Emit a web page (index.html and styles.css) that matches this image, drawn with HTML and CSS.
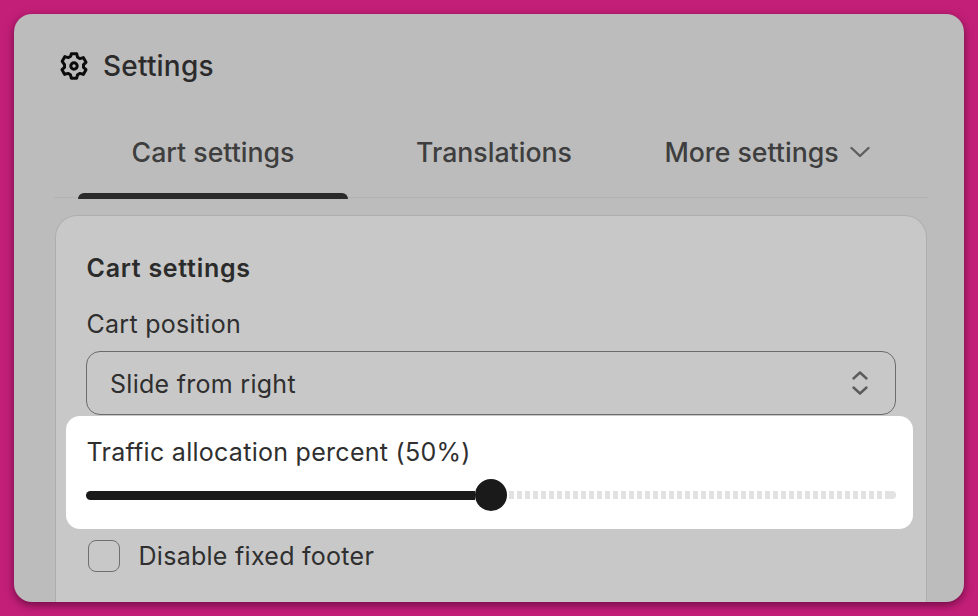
FILE: index.html
```html
<!DOCTYPE html>
<html lang="en">
<head>
<meta charset="utf-8">
<title>Settings</title>
<link rel="stylesheet" href="styles.css">
</head>
<body>
<main class="window">
  <header class="title-row">
    <svg class="gear" viewBox="0 0 30 30" width="30" height="30" fill="none" stroke="#0c0c0c" stroke-width="3" stroke-linejoin="round">
      <path d="M12.300 2.800h5.400l.8 3.400 2.500 1.400 3.300-1 2.700 4.700-2.500 2.300v2.800l2.500 2.300-2.700 4.700-3.300-1-2.500 1.400-.8 3.400h-5.400l-.8-3.400-2.500-1.400-3.300 1-2.700-4.700 2.500-2.300v-2.800L3.200 10.300l2.700-4.700 3.300 1 2.500-1.400z"/>
      <circle cx="15" cy="15" r="3.200"/>
    </svg>
    <h1 class="title">Settings</h1>
  </header>
  <nav class="tabs">
    <div class="tab tab-active">Cart settings</div>
    <div class="tab tab-mid">Translations</div>
    <div class="tab tab-more">More settings
      <svg class="chev" viewBox="0 0 20 12" width="20" height="12" fill="none" stroke="#5e5e5e" stroke-width="2.400" stroke-linecap="round" stroke-linejoin="round"><path d="M1.500 2l8.500 8 8.500-8"/></svg>
    </div>
  </nav>
  <section class="card">
    <h2 class="card-title">Cart settings</h2>
    <div class="label">Cart position</div>
    <div class="select">
      <span class="select-text">Slide from right</span>
      <svg viewBox="0 0 18 28" width="18" height="28" fill="none" stroke="#5c5c5c" stroke-width="2.400" stroke-linecap="round" stroke-linejoin="round"><path d="M2.500 9.500L9 3.500l6.500 6M2.500 18.500L9 24.500l6.500-6"/></svg>
    </div>
    <div class="highlight">
      <div class="label">Traffic allocation percent (50%)</div>
      <div class="slider">
        <div class="fill"></div>
        <div class="thumb"></div>
        <div class="rest"></div>
      </div>
    </div>
    <label class="check-row">
      <span class="box"></span>
      <span class="label">Disable fixed footer</span>
    </label>
  </section>
</main>
</body>
</html>
```
FILE: styles.css
```css
* { box-sizing: border-box; }
html, body { height: 100%; }
body {
  margin: 0;
  padding: 14px;
  background: #c41f78;
  font-family: Inter, "Liberation Sans", sans-serif;
  color: #2b2b2b;
  overflow: hidden;
}
.window {
  width: 950px;
  height: 588px;
  background: #bcbcbc;
  border-radius: 18px;
  overflow: hidden;
  box-shadow: 0 3px 10px rgba(60, 0, 40, .65);
  padding: 0 36px 0 40px;
}
.title-row {
  display: flex;
  align-items: center;
  gap: 14px;
  height: 30px;
  margin-top: 37px;
  margin-left: 5px;
}
.gear { flex: none; }
.title {
  margin: 0;
  font-size: 28px;
  font-weight: 550;
  line-height: 30px;
  letter-spacing: .2px;
  color: #2b2b2b;
}
.tabs {
  display: flex;
  margin-top: 52px;
  width: 874px;
  height: 65px;
  padding-left: 24px;
  border-bottom: 1px solid #b2b2b2;
  font-size: 26.700px;
  font-weight: 550;
  color: #3e3e3e;
}
.tab {
  position: relative;
  display: flex;
  align-items: center;
  justify-content: center;
  height: 64px;
  padding-bottom: 26px;
  white-space: nowrap;
}
.tab-active { width: 270px; }
.tab-active::after {
  content: "";
  position: absolute;
  left: 0;
  right: 0;
  bottom: -2px;
  height: 6px;
  border-radius: 6px 6px 0 0;
  background: #2a2a2a;
}
.tab-mid { width: 292px; }
.tab-more { width: 254px; gap: 11px; }
.card {
  margin: 17px 0 0 1px;
  width: 872px;
  height: 400px;
  background: #c8c8c8;
  border: 1px solid #aeaeae;
  border-bottom: 0;
  border-radius: 22px 22px 0 0;
  padding: 0 30px;
}
.card-title {
  margin: 38px 0 0;
  padding-left: .5px;
  font-size: 25px;
  font-weight: 600;
  line-height: 29px;
  letter-spacing: .72px;
  color: #2b2b2b;
}
.label {
  padding-left: .5px;
  font-size: 25px;
  line-height: 30px;
  color: #2f2f2f;
  letter-spacing: .28px;
}
.card-title + .label { margin-top: 26px; }
.select {
  margin-top: 12px;
  width: 810px;
  height: 64px;
  display: flex;
  align-items: center;
  justify-content: space-between;
  padding: 0 26px 0 23px;
  border: 1px solid #6b6b6b;
  border-radius: 14px;
  font-size: 25px;
  color: #2f2f2f;
  letter-spacing: .28px;
}
.select-text { padding-top: 2px; }
.highlight {
  margin: 1px 0 0 -20px;
  width: 847px;
  height: 113px;
  background: #fff;
  border-radius: 14px;
  padding: 21px 17px 0 20px;
}
.slider {
  display: flex;
  align-items: center;
  margin-top: 12px;
  height: 32px;
  width: 810px;
}
.fill {
  width: 389px;
  height: 9px;
  border-radius: 5px 0 0 5px;
  background: #1a1a1a;
}
.thumb {
  flex: none;
  width: 32px;
  height: 32px;
  border-radius: 50%;
  background: #1a1a1a;
}
.rest {
  flex: 1;
  height: 8px;
  margin-left: 2px;
  border-radius: 0 4px 4px 0;
  background:
    linear-gradient(#e2e2e2, #e2e2e2) right / 10px 100% no-repeat,
    repeating-linear-gradient(to right, #e2e2e2 0 5px, #fff 5px 8px);
}
.check-row {
  display: flex;
  align-items: center;
  gap: 18px;
  margin: 11px 0 0 2px;
}
.box {
  width: 32px;
  height: 32px;
  border: 1px solid #6f6f6f;
  border-radius: 8px;
}
```
